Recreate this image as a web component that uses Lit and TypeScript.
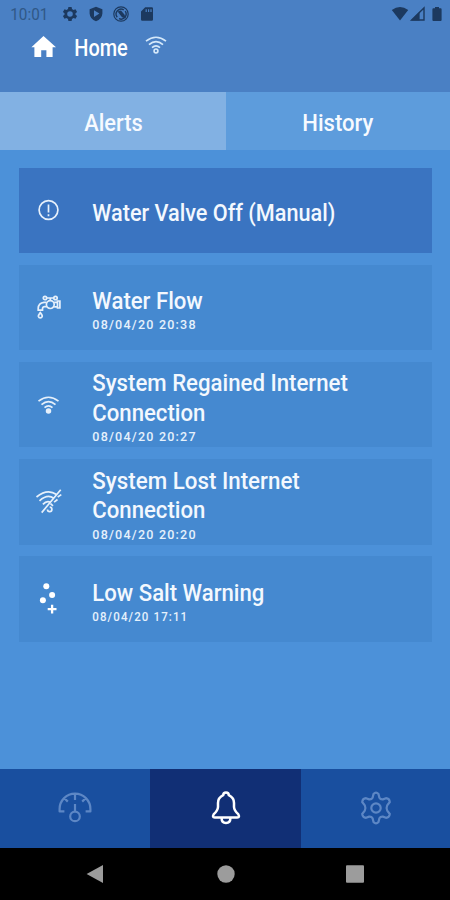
import { LitElement, html, svg, css, nothing } from "lit";
import { customElement, property } from "lit/decorators.js";

interface Line {
  text: string;
  width: number;
}

interface Alert {
  icon: string;
  title: Line[];
  date?: Line;
  active?: boolean;
}

const alerts: Alert[] = [
  { icon: "alert", title: [{ text: "Water Valve Off (Manual)", width: 243 }], active: true },
  { icon: "tap", title: [{ text: "Water Flow", width: 110.5 }], date: { text: "08/04/20 20:38", width: 104.5 } },
  {
    icon: "wifi",
    title: [{ text: "System Regained Internet", width: 255.5 }, { text: "Connection", width: 113 }],
    date: { text: "08/04/20 20:27", width: 104.5 },
  },
  {
    icon: "nowifi",
    title: [{ text: "System Lost Internet", width: 207.5 }, { text: "Connection", width: 113 }],
    date: { text: "08/04/20 20:20", width: 104.5 },
  },
  { icon: "salt", title: [{ text: "Low Salt Warning", width: 172 }], date: { text: "08/04/20 17:11", width: 96 } },
];

const wifiArcs = svg`
  <path d="M-10-3.9Q0-11.6 10-3.9M-7-.4Q0-6.4 7-.4M-4 2.7Q0-.8 4 2.7" />`;

const icons: Record<string, unknown> = {
  alert: svg`<circle r="9.4" /><path d="M0-5.6V2.6M0 4.2V6.2" />`,
  tap: svg`
    <circle cx="-3.5" cy="-9" r="1.7" /><circle cx="7" cy="-9" r="1.7" />
    <path d="M-1.8-9H5.3M1.8-9V-6.4" />
    <circle cx="1.8" cy="-2.4" r="3.9" />
    <path d="M5.6-4.6H8.6M5.6-.2H8.6M9-6H11.4V1H9Z" />
    <path d="M-2-4.6H-4.5Q-10-4-10.3 1.4V3.2H-6V1.6Q-5.8-.4-3.8-.4H-1.6" />
    <path d="M-8.2 5.6Q-5.9 8.4-6.3 9.5A2 2 0 0 1-10.1 9.5Q-10.3 8.2-8.2 5.6Z" />`,
  wifi: svg`${wifiArcs}<circle cy="5.9" r="1.9" fill="#e6f0fb" />`,
  nowifi: svg`
    <path d="M-12-5Q-1-14 8-7.5M-9-1.2Q-1-8.4 5.2-3.8M-5.6 2.4Q-2-1.8 2 .2" />
    <path d="M12.2-12.2L-6.8 10.6M12.8-7.4L9.2-5M9-2.5L5.6.2M-1 7.4A2.2 2.2 0 1 0 1.2 5.2M2 1.6L4.5 3.8" />`,
  salt: svg`
    <g fill="#fff" stroke="none">
      <circle cx="-2.2" cy="-12.7" r="3" /><circle cx="3.6" cy="-4" r="3" /><circle cx="-5.6" cy="1.2" r="3" />
    </g>
    <path d="M3.6 5.8V14.6M-.8 10.2H8" stroke-width="2.3" stroke="#fff" />`,
};

@customElement("fit-text")
class FitText extends LitElement {
  @property() text = "";
  @property({ type: Number }) width = 0;
  @property({ type: Number }) height = 29.5;
  @property({ type: Number }) baseline = 21.7;

  static styles = css`
    :host { display: block; }
    svg { display: block; overflow: visible; }
    text { fill: currentColor; }
  `;

  render() {
    return html`<svg width=${this.width} height=${this.height}>
      <text x="0.3" y=${this.baseline} textLength=${this.width} lengthAdjust="spacingAndGlyphs">${this.text}</text>
    </svg>`;
  }
}

@customElement("status-bar")
class StatusBar extends LitElement {
  static styles = css`
    :host {
      display: flex;
      height: 29px;
      color: #1c395f;
      box-sizing: border-box;
      padding: 5px 4px 0 10px;
      font: 400 16px Roboto, sans-serif;
    }
    svg { display: block; width: 18px; height: 18px; fill: currentColor; }
    .time { color: #305887; width: 51px; }
    .left, .right { display: flex; }
    .left { gap: 7.6px; }
    .right { margin-left: auto; gap: 0.7px; }
  `;

  render() {
    return html`
      <fit-text class="time" text="10:01" width="38" height="18" baseline="15"></fit-text>
      <div class="left">
        <svg viewBox="-9 -9 18 18">
          <path fill-rule="evenodd" d="M-1.6-7H1.6L2-4.9 3.5-4 5.5-4.8 7.1-2.1 5.5-.8V.8L7.1 2.1 5.5 4.8 3.5 4 2 4.9 1.6 7H-1.6L-2 4.9-3.5 4-5.5 4.8-7.1 2.1-5.5.8V-.8L-7.1-2.1-5.5-4.8-3.5-4-2-4.9ZM0-2.8A2.8 2.8 0 1 0 0 2.8A2.8 2.8 0 1 0 0-2.8Z" />
        </svg>
        <svg viewBox="-9 -9 18 18">
          <path fill-rule="evenodd" d="M0-7.3L6.4-4.8V-.4Q6 5.2 0 7.3Q-6 5.2-6.4-.4V-4.8ZM-2-3.8V3L3.4-.4Z" />
        </svg>
        <svg viewBox="-9 -9 18 18">
          <circle r="7.2" fill="none" stroke="currentColor" stroke-width="1.2" />
          <path d="M-3.8 3.2A5 5 0 0 1 2.8-4.1M4.2-2.8A5 5 0 0 1-2 4.6" fill="none" stroke="currentColor" stroke-width="1.4" />
          <path d="M-3.4-2.4L0-3.4 3.4.6 5 4.6 1 3.2Z" />
        </svg>
        <svg viewBox="-9 -9 18 18">
          <path fill-rule="evenodd" d="M-1.8-6.8H4.8Q6-6.8 6-5.6V5.5Q6 6.8 4.8 6.8H-4.8Q-6 6.8-6 5.5V-2.6ZM-1.4-4.8V-2H-.2V-4.8ZM1-4.8V-2H2.2V-4.8ZM3.4-4.8V-2H4.6V-4.8Z" />
        </svg>
      </div>
      <div class="right">
        <svg viewBox="-9 -9 18 18"><path d="M-8.2-4Q0-10 8.2-4L0 6.4Z" /></svg>
        <svg viewBox="-9 -9 18 18">
          <path d="M6-6V6H-6.4Z" fill="none" stroke="currentColor" stroke-width="1.4" />
          <path d="M1.6-2.2V6.4H-6.8Z" />
        </svg>
        <svg viewBox="-9 -9 18 18">
          <path d="M-2-7H2V-5.8H3.6Q4.6-5.8 4.6-4.8V6Q4.6 7 3.6 7H-3.6Q-4.6 7-4.6 6V-4.8Q-4.6-5.8-3.6-5.8H-2Z" />
        </svg>
      </div>
    `;
  }
}

@customElement("alert-card")
class AlertCard extends LitElement {
  @property({ attribute: false }) alert!: Alert;

  static styles = css`
    :host { display: block; }
    .card {
      display: flex;
      align-items: center;
      height: 85.5px;
      background: #4589d0;
      color: #f3f8fe;
    }
    .card.active { background: #3a74c1; }
    .icon {
      display: block;
      width: 59px;
      height: 40px;
      margin-right: 14.3px;
      fill: none;
      stroke: #e6f0fb;
      stroke-width: 1.7;
      flex: none;
    }
    .active .copy { padding-top: 6.5px; }
    .title { font: 500 24px Roboto, sans-serif; }
    .date { font: 500 12.4px Roboto, sans-serif; letter-spacing: 1.2px; color: #e6f1fc; }
  `;

  render() {
    const { icon, title, date, active } = this.alert;
    return html`
      <div class="card ${active ? "active" : ""}">
        <svg class="icon" viewBox="-29.5 -20 59 40">${icons[icon]}</svg>
        <div class="copy">
          ${title.map((l) => html`<fit-text class="title" .text=${l.text} .width=${l.width}></fit-text>`)}
          ${date
            ? html`<fit-text class="date" .text=${date.text} .width=${date.width} .height=${11.5} .baseline=${12.8}></fit-text>`
            : nothing}
        </div>
      </div>
    `;
  }
}

@customElement("app-root")
class AppRoot extends LitElement {
  static styles = css`
    :host {
      display: flex;
      flex-direction: column;
      height: 900px;
      background: #4c91d9;
      color: #fff;
      font: 500 24px Roboto, sans-serif;
      overflow: hidden;
    }
    svg { display: block; }
    .top { height: 92px; background: #4a80c4; flex: none; }
    .crumbs { display: flex; align-items: center; height: 36px; padding-left: 31px; }
    .house { width: 26px; height: 24px; margin-right: 16.8px; }
    .signal { margin-left: 14.5px; margin-top: -4px; fill: none; stroke: #d5e8fa; stroke-width: 1.7; }
    .tabs { display: grid; grid-template-columns: 225.5px 1fr; height: 58px; flex: none; }
    .tab { display: flex; justify-content: center; align-items: center; background: #5d9cdc; color: #f6faff; }
    .tab.on { background: #82b1e3; }
    .list { display: flex; flex-direction: column; gap: 11.7px; padding: 17.5px 18px 0 19px; flex: 1; }
    .nav { display: grid; grid-template-columns: 150px 151px 1fr; height: 78.5px; flex: none; }
    .cell { display: flex; align-items: center; justify-content: center; background: #194f9f; color: #5d87c5; }
    .cell.on { background: #112f75; color: #fff; }
    .cell svg { width: 40px; height: 40px; fill: none; stroke: currentColor; stroke-width: 2.2; stroke-linejoin: round; }
    .cell.on svg { stroke-width: 2.5; }
    .system { display: flex; height: 52.5px; background: #000; flex: none; align-items: center; justify-content: space-between; padding: 0 85px 0 86px; }
    .system svg { width: 20px; height: 20px; fill: #9c9c9c; }
  `;

  render() {
    return html`
      <div class="top">
        <status-bar></status-bar>
        <div class="crumbs">
          <svg class="house" viewBox="0 0 26 24"><path fill="#fff" d="M12.5 1L25 12.2H21.6V22H15.4V15.2H10.2V22H3.4V12.2H0.4Z" /></svg>
          <fit-text text="Home" width="53.5" height="29.5" baseline="24"></fit-text>
          <svg class="signal" width="30" height="26" viewBox="-14 -13 30 26">${wifiArcs}<circle cy="5.9" r="1.9" /></svg>
        </div>
      </div>
      <div class="tabs">
        <div class="tab on"><fit-text text="Alerts" width="58.5" height="29.5" baseline="24.7"></fit-text></div>
        <div class="tab"><fit-text text="History" width="71" height="29.5" baseline="24.7"></fit-text></div>
      </div>
      <div class="list">${alerts.map((a) => html`<alert-card .alert=${a}></alert-card>`)}</div>
      <div class="nav">
        <div class="cell">
          <svg viewBox="-20 -20 40 40">
            <path d="M-10.6 3.4H-15.4V1A15.4 15.4 0 0 1 15.4 1V3.4H10.6M0-14.4V-8M-10.6-9.8L-7.2-6.4M10.6-9.8L7.2-6.4M0-4V3.6" />
            <circle cy="8.4" r="4.8" />
          </svg>
        </div>
        <div class="cell on">
          <svg viewBox="-20 -20 40 40">
            <path d="M-2.8-12.8Q-2.8-15.6 0-15.6Q2.8-15.6 2.8-12.8Q8-10.2 8-5V-1Q8.2 2.4 12.2 6.2Q14.2 9.4 11.2 9.6H-11.2Q-14.2 9.4-12.2 6.2Q-8.2 2.4-8-1V-5Q-8-10.2-2.8-12.8Z" />
            <path d="M-4.4 10Q-4.4 15 0 15Q4.4 15 4.4 10" />
          </svg>
        </div>
        <div class="cell">
          <svg viewBox="-20 -20 40 40">
            <path d="M-2.5-14Q0-16.8 2.5-14L3.4-10.2Q4.4-8.4 6.8-8.6L10-9.8Q13.4-9.6 13.8-6L11.2-2.6Q10-0 11.2 2.6L13.8 6Q13.4 9.6 10 9.8L6.8 8.6Q4.4 8.4 3.4 10.2L2.5 14Q0 16.8-2.5 14L-3.4 10.2Q-4.4 8.4-6.8 8.6L-10 9.8Q-13.4 9.6-13.8 6L-11.2 2.6Q-10 0-11.2-2.6L-13.8-6Q-13.4-9.6-10-9.8L-6.8-8.6Q-4.4-8.4-3.4-10.2Z" />
            <circle r="4.7" />
          </svg>
        </div>
      </div>
      <div class="system">
        <svg viewBox="0 0 20 20"><path d="M.6 10L17 1V19Z" /></svg>
        <svg viewBox="0 0 20 20"><circle cx="10" cy="10" r="8.7" /></svg>
        <svg viewBox="0 0 20 20"><rect x="1" y="1.2" width="18" height="17.6" rx="1" /></svg>
      </div>
    `;
  }
}
